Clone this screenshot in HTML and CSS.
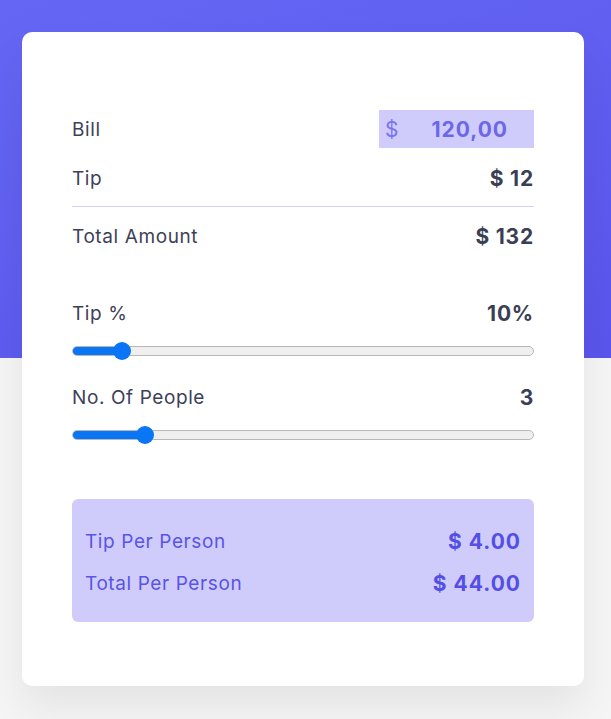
FILE: index.html
```html
<!DOCTYPE html>
<html lang="en">
<head>
<meta charset="utf-8">
<title>Tip Calculator</title>
<link rel="stylesheet" href="styles.css">
</head>
<body>
<div class="page">
  <main class="card">
    <div class="row row-bill">
      <span class="label">Bill</span>
      <label class="bill-input">
        <span class="currency">$</span>
        <input class="bill-value" type="text" value="120,00">
      </label>
    </div>
    <div class="row row-tip">
      <span class="label">Tip</span>
      <span class="value">$ 12</span>
    </div>
    <hr class="divider">
    <div class="row row-total">
      <span class="label">Total Amount</span>
      <span class="value">$ 132</span>
    </div>

    <section class="control control-tip">
      <div class="row control-head">
        <span class="label">Tip %</span>
        <span class="value">10%</span>
      </div>
      <input class="slider" type="range" min="1" max="100" value="10" style="--p: 9.1%">
    </section>

    <section class="control control-people">
      <div class="row control-head">
        <span class="label">No. Of People</span>
        <span class="value">3</span>
      </div>
      <input class="slider" type="range" min="1" max="15" value="3" style="--p: 14.3%">
    </section>

    <section class="result">
      <div class="row result-row">
        <span class="result-label">Tip Per Person</span>
        <span class="result-value">$ 4.00</span>
      </div>
      <div class="row result-row">
        <span class="result-label">Total Per Person</span>
        <span class="result-value">$ 44.00</span>
      </div>
    </section>
  </main>
</div>
</body>
</html>
```

FILE: styles.css
```css
* { box-sizing: border-box; }

html, body {
  margin: 0;
  padding: 0;
}

body {
  font-family: "Inter", "Noto Sans", "Liberation Sans", sans-serif;
  color: #3c4057;
}

.page {
  min-height: 719px;
  padding: 32px 27px 33px 22px;
  background:
    linear-gradient(to bottom, transparent 358px, #f5f5f5 358px),
    linear-gradient(160deg, #6567f4 0%, #5a55ec 60%, #5650e6 100%);
}

.card {
  background: #ffffff;
  border-radius: 10px;
  padding: 78px 50px 64px;
  box-shadow: 0 22px 40px rgba(0, 0, 0, 0.07);
}

.row {
  display: flex;
  align-items: center;
  justify-content: space-between;
}

.label {
  font-size: 19px;
  letter-spacing: 0.6px;
  color: #3d4158;
}

.value {
  font-size: 21px;
  font-weight: 700;
  letter-spacing: 0.8px;
  color: #3b3f55;
}

.row-bill { height: 38px; }

.bill-input {
  width: 155px;
  height: 38px;
  display: flex;
  align-items: center;
  background: #cfccfc;
  padding: 0 26px 0 6px;
}

.currency {
  font-size: 21px;
  color: #7874ef;
}

.bill-value {
  flex: 1;
  min-width: 0;
  border: none;
  background: transparent;
  text-align: right;
  font-family: inherit;
  font-size: 21px;
  font-weight: 700;
  letter-spacing: 1px;
  color: #6c67e8;
  padding: 0;
  outline: none;
}

.row-tip {
  height: 40px;
  margin-top: 10px;
}

.divider {
  border: none;
  height: 1px;
  background: #d4d0fb;
  margin: 8px 0 0;
}

.row-total {
  height: 40px;
  margin-top: 9px;
}

.control-tip { margin-top: 45px; }
.control-people { margin-top: 29px; }

.control-head { height: 24px; }

.slider {
  -webkit-appearance: none;
  appearance: none;
  display: block;
  width: 100%;
  height: 10px;
  margin: 21px 0 0;
  border: 1px solid #b8b8b8;
  border-radius: 5px;
  background: linear-gradient(to right, #0a75f5 var(--p), #efefef var(--p));
  outline: none;
}

.slider::-webkit-slider-thumb {
  -webkit-appearance: none;
  appearance: none;
  width: 18px;
  height: 18px;
  border-radius: 50%;
  background: #0a75f5;
  border: none;
}

.result {
  margin-top: 59px;
  background: #cfccfc;
  border-radius: 6px;
  padding: 22px 13px 19px;
  display: flex;
  flex-direction: column;
  gap: 2px;
}

.result-row { height: 40px; }

.result-label {
  font-size: 19px;
  letter-spacing: 0.6px;
  color: #5954e6;
}

.result-value {
  font-size: 21px;
  font-weight: 700;
  letter-spacing: 1px;
  color: #544fe4;
}
```
